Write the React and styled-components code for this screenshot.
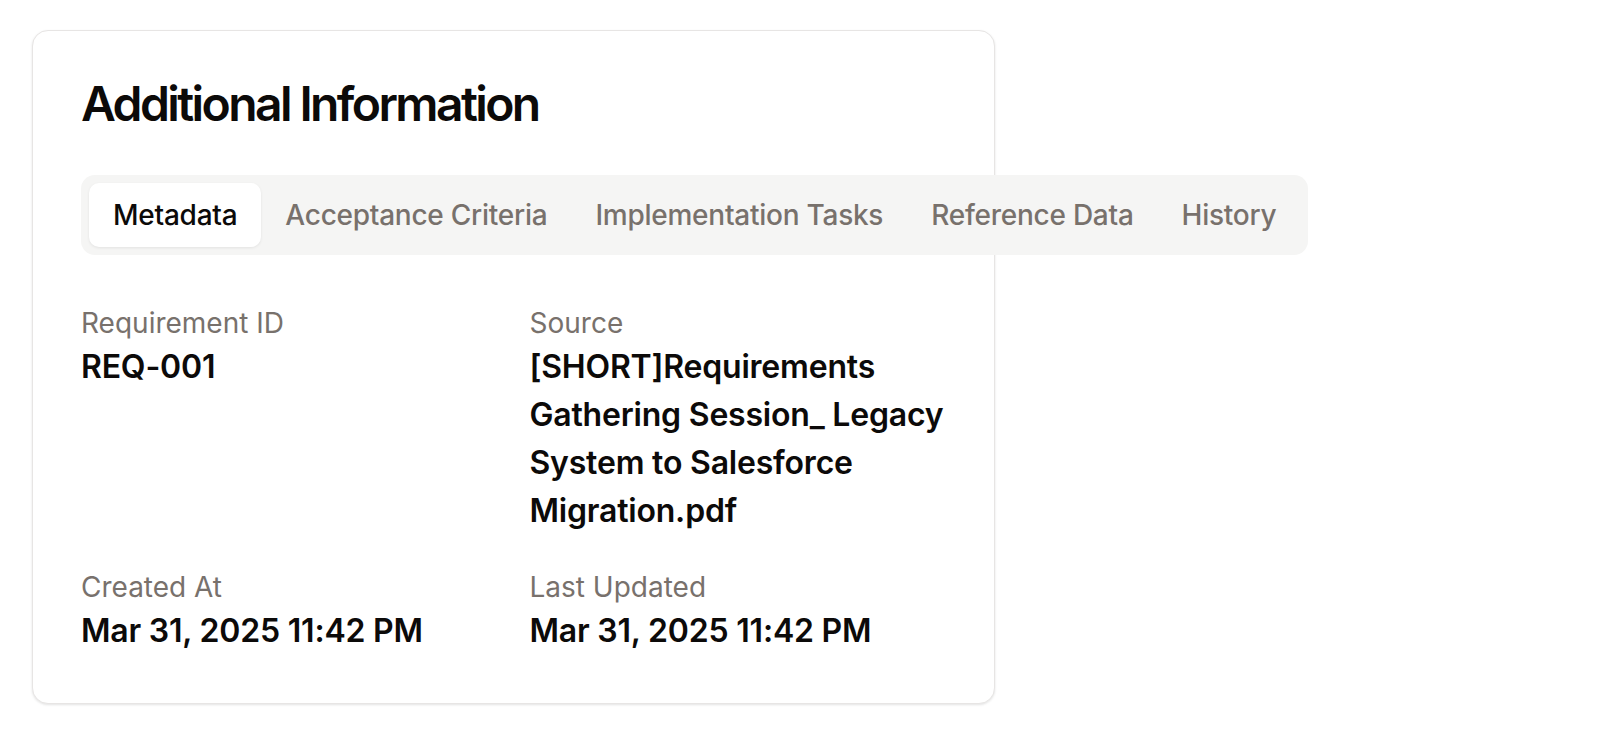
import React, { useState } from "react";
import styled, { createGlobalStyle } from "styled-components";

const GlobalStyle = createGlobalStyle`
  * {
    box-sizing: border-box;
  }
  body {
    margin: 0;
    background: #ffffff;
    font-family: Inter, "Noto Sans", "Liberation Sans", sans-serif;
    color: #0c0a09;
    -webkit-font-smoothing: antialiased;
  }
`;

const Page = styled.div`
  padding: 30px 32px;
`;

const Card = styled.section`
  width: 963px;
  border: 1px solid #e7e5e4;
  border-radius: 16px;
  background: #ffffff;
  box-shadow: 0 1px 3px rgba(0, 0, 0, 0.08), 0 1px 2px rgba(0, 0, 0, 0.04);
  padding: 48px;
`;

const Title = styled.h2`
  margin: 0;
  font-size: 48px;
  line-height: 50px;
  font-weight: 600;
  letter-spacing: -2.6px;
  color: #0c0a09;
`;

const TabList = styled.div`
  display: inline-flex;
  align-items: center;
  margin-top: 46px;
  padding: 8px;
  height: 80px;
  border-radius: 14px;
  background: #f5f5f4;
`;

const Tab = styled.button`
  height: 64px;
  padding: 0 24px;
  border: none;
  border-radius: 10px;
  white-space: nowrap;
  font-family: inherit;
  font-size: 28px;
  font-weight: 500;
  letter-spacing: -0.25px;
  cursor: pointer;
  color: ${(props) => (props.active ? "#0c0a09" : "#78716c")};
  background: ${(props) => (props.active ? "#ffffff" : "transparent")};
  box-shadow: ${(props) =>
    props.active ? "0 1px 3px rgba(0, 0, 0, 0.08)" : "none"};
`;

const Fields = styled.dl`
  display: grid;
  grid-template-columns: 1fr 1fr;
  gap: 32px;
  margin: 48px 0 0;
`;

const Field = styled.div``;

const Label = styled.dt`
  font-size: 28px;
  line-height: 40px;
  font-weight: 400;
  color: #78716c;
`;

const Value = styled.dd`
  margin: 0;
  font-size: 32px;
  line-height: 48px;
  font-weight: 600;
  letter-spacing: -0.2px;
  color: #0c0a09;
`;

const tabs = [
  "Metadata",
  "Acceptance Criteria",
  "Implementation Tasks",
  "Reference Data",
  "History",
];

const fields = [
  { label: "Requirement ID", value: "REQ-001" },
  {
    label: "Source",
    value:
      "[SHORT]Requirements Gathering Session_ Legacy System to Salesforce Migration.pdf",
  },
  { label: "Created At", value: "Mar 31, 2025 11:42 PM" },
  { label: "Last Updated", value: "Mar 31, 2025 11:42 PM" },
];

const App = () => {
  const [current, setCurrent] = useState("Metadata");

  return (
    <Page>
      <GlobalStyle />
      <Card>
        <Title>Additional Information</Title>
        <TabList>
          {tabs.map((t) => (
            <Tab key={t} active={current === t} onClick={() => setCurrent(t)}>
              {t}
            </Tab>
          ))}
        </TabList>
        <Fields>
          {fields.map((f) => (
            <Field key={f.label}>
              <Label>{f.label}</Label>
              <Value>{f.value}</Value>
            </Field>
          ))}
        </Fields>
      </Card>
    </Page>
  );
};

export default App;
